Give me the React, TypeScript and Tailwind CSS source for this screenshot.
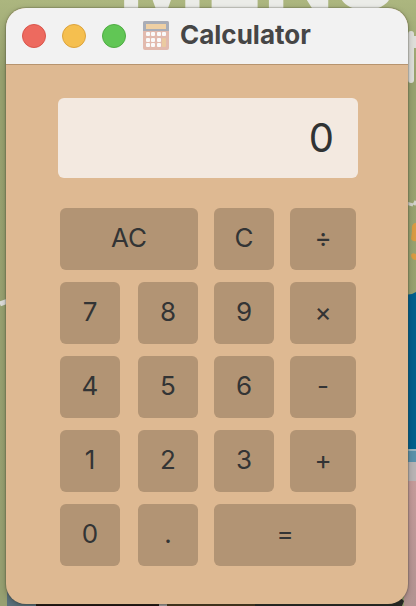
import { useState } from "react";

type Key = { label: string; name?: string; className?: string };

const keys: Key[] = [
  { label: "AC", name: "All clear", className: "col-span-2" },
  { label: "C", name: "Clear" },
  { label: "÷", name: "Divide" },
  { label: "7", className: "mr-0.5" },
  { label: "8" },
  { label: "9" },
  { label: "×", name: "Multiply" },
  { label: "4", className: "mr-0.5" },
  { label: "5" },
  { label: "6" },
  { label: "-", name: "Subtract" },
  { label: "1", className: "mr-0.5" },
  { label: "2" },
  { label: "3" },
  { label: "+", name: "Add" },
  { label: "0", className: "mr-0.5" },
  { label: ".", name: "Decimal point" },
  { label: "=", name: "Equals", className: "col-span-2" },
];

const lights = [
  { name: "Close", className: "border-[#d9554c] bg-[#ed6a5f]" },
  { name: "Minimize", className: "border-[#dca33c] bg-[#f5bf4f]" },
  { name: "Zoom", className: "border-[#4fac43] bg-[#61c655]" },
];

const operators: Record<string, string> = { "÷": "/", "×": "*", "-": "-", "+": "+" };

function apply(a: number, op: string, b: number) {
  if (op === "/") return a / b;
  if (op === "*") return a * b;
  if (op === "-") return a - b;
  return a + b;
}

function CalculatorIcon() {
  return (
    <svg viewBox="0 0 26 29" className="h-[29px] w-[26px] shrink-0" aria-hidden="true">
      <rect width="26" height="29" rx="2" fill="#e2baae" />
      <path d="M2 0H24A2 2 0 0 1 26 2V10H0V2A2 2 0 0 1 2 0Z" fill="#a9adb7" />
      <rect x="3" y="3" width="20" height="5" fill="#efd0a4" />
      <g fill="#fafafa">
        {[3, 8, 14, 19].map((x) => (
          <rect key={x} x={x} y="11" width="4" height="4" rx="1" />
        ))}
        {[3, 8, 14].map((x) => (
          <rect key={x} x={x} y="17" width="4" height="4" rx="1" />
        ))}
        {[3, 8, 14].map((x) => (
          <rect key={x} x={x} y="22" width="4" height="4" rx="1" />
        ))}
      </g>
      <rect x="19" y="17" width="4" height="9" rx="1" fill="#ebcaa0" />
    </svg>
  );
}

function Wallpaper() {
  return (
    <div className="absolute inset-0 overflow-hidden" aria-hidden="true">
      <svg viewBox="0 0 416 606" preserveAspectRatio="none" className="absolute inset-0 size-full">
        <defs>
          <linearGradient id="olive" x1="0" y1="0" x2="0" y2="1">
            <stop offset="0" stopColor="#acb67f" />
            <stop offset="0.12" stopColor="#98a26f" />
            <stop offset="1" stopColor="#97a071" />
          </linearGradient>
          <linearGradient id="rose" x1="0" y1="0" x2="0" y2="1">
            <stop offset="0" stopColor="#c59b9a" />
            <stop offset="1" stopColor="#b29391" />
          </linearGradient>
        </defs>
        <rect width="416" height="606" fill="url(#olive)" />
        <path d="M0 304L8 301" stroke="#dededa" strokeWidth="5" />
        <path d="M411 34V80" stroke="#deded9" strokeWidth="6" strokeLinecap="round" />
        <path d="M415 36V48" stroke="#deded9" strokeWidth="4" />
        <path d="M406 203L413 205M414 205L416 201" stroke="#d2d2cb" strokeWidth="3" />
        <path d="M416 223Q411 223 412 231L411 239Q413 242 416 241ZM416 254Q411 252 411 256Q412 260 416 260Z" fill="#d99b43" />
        <path d="M404 295L412 294L416 292V450H404Z" fill="#005f8c" />
        <rect x="404" y="449" width="12" height="14" fill="#5b91aa" />
        <rect x="404" y="449" width="12" height="2" fill="#9ab4bd" />
        <rect x="404" y="462" width="12" height="20" fill="#b8b3b4" />
        <rect x="404" y="481" width="12" height="125" fill="url(#rose)" />
        <path d="M7 590L7 606H42V600Z" fill="#5b727c" />
        <rect x="36" y="600" width="123" height="6" fill="#241713" />
        <rect x="159" y="600" width="8" height="6" fill="#a5a3a0" />
        <rect x="167" y="600" width="88" height="6" fill="#4c3b20" />
        <path d="M255 600H392L399 596L404 601L402 606H255Z" fill="#292b27" />
      </svg>
      <span className="absolute top-[-84px] left-[118px] font-['Inter',sans-serif] text-[94px] leading-[118px] font-bold whitespace-nowrap text-[#ebece8]">
        MENS
      </span>
    </div>
  );
}

export default function App() {
  const [value, setValue] = useState("0");
  const [stored, setStored] = useState<number | null>(null);
  const [op, setOp] = useState<string | null>(null);
  const [fresh, setFresh] = useState(true);

  function press(key: string) {
    if (key === "AC") {
      setValue("0");
      setStored(null);
      setOp(null);
      setFresh(true);
    } else if (key === "C") {
      setValue("0");
      setFresh(true);
    } else if (key in operators || key === "=") {
      const current = Number(value);
      const result = op && stored !== null && !fresh ? apply(stored, op, current) : current;
      setValue(String(result));
      setStored(result);
      setOp(key === "=" ? null : operators[key]);
      setFresh(true);
    } else if (key === ".") {
      if (fresh) setValue("0.");
      else if (!value.includes(".")) setValue(value + ".");
      setFresh(false);
    } else {
      setValue(fresh || value === "0" ? key : value + key);
      setFresh(false);
    }
  }

  return (
    <div className="relative min-h-screen overflow-hidden bg-[#98a26f] pt-2 pr-2 pb-0.5 pl-1.5 font-['Inter',sans-serif]">
      <Wallpaper />
      <main className="relative overflow-hidden rounded-[20px] bg-[#deb992] shadow-[0_0_1px_1px_rgba(60,60,40,0.25),0_2px_6px_rgba(0,0,0,0.25)]">
        <header className="flex h-[57px] items-center border-b border-[#b7946f] bg-[#f2f2f2] pl-4">
          <div className="flex gap-4">
            {lights.map((light) => (
              <button
                key={light.name}
                type="button"
                aria-label={light.name}
                className={`size-6 rounded-full border ${light.className}`}
              />
            ))}
          </div>
          <div className="ml-[17px] flex items-center gap-[11px] pb-0.5">
            <CalculatorIcon />
            <h1 className="text-[26px] leading-8 font-bold text-[#464646]">Calculator</h1>
          </div>
        </header>
        <div className="pt-[33px] pr-[50px] pb-[38px] pl-[52px]">
          <input
            type="text"
            readOnly
            aria-label="Result"
            value={value}
            className="block h-20 w-full rounded-md bg-[#f3e9e0] px-6 pb-0.5 text-right text-[40px] leading-[48px] text-[#303334] outline-none"
          />
          <div className="mt-[30px] grid grid-cols-[62fr_60fr_60fr_66fr] gap-x-4 gap-y-3 px-0.5">
            {keys.map((key) => (
              <button
                key={key.label}
                type="button"
                aria-label={key.name}
                onClick={() => press(key.label)}
                className={`h-[62px] rounded-md bg-[#b29474] pb-0.5 text-[26px] leading-8 text-[#333435] ${key.className ?? ""}`}
              >
                {key.label}
              </button>
            ))}
          </div>
        </div>
      </main>
    </div>
  );
}
